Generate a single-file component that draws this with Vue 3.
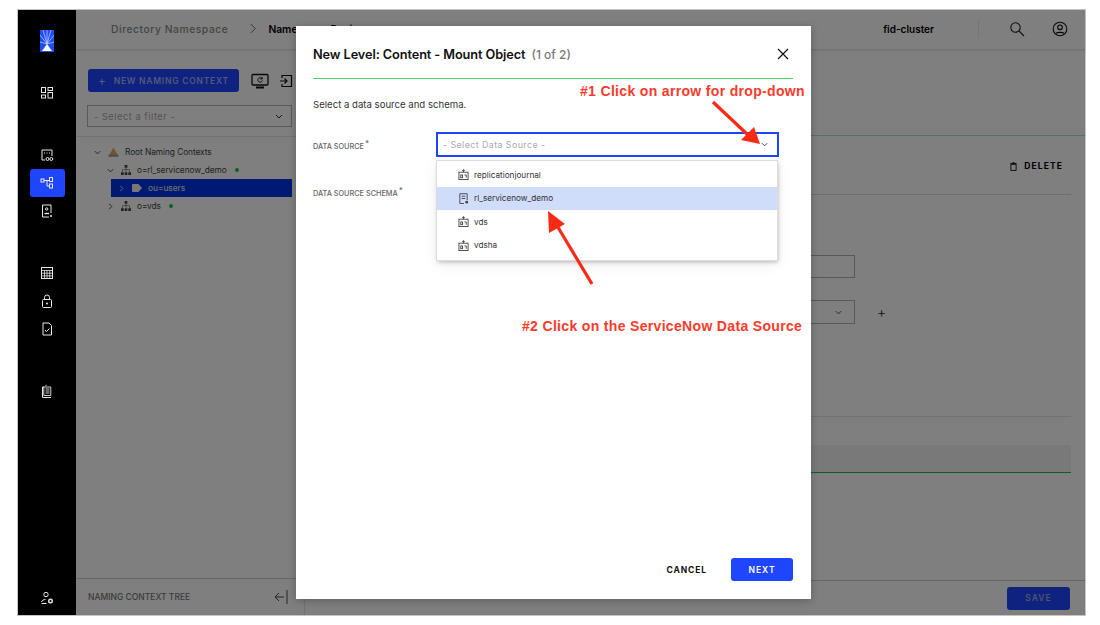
<script setup>
const sideGroups = [
  { cls: 'g1', items: [{ id: 'dash' }] },
  { cls: 'g2', items: [{ id: 'server' }, { id: 'tree', active: true }, { id: 'person' }] },
  { cls: 'g2', items: [{ id: 'grid' }, { id: 'lock' }, { id: 'check' }] },
  { cls: 'g2', items: [{ id: 'list' }] },
]
const options = [
  { label: 'replicationjournal', icon: 'store' },
  { label: 'rl_servicenow_demo', icon: 'doc', hover: true },
  { label: 'vds', icon: 'store' },
  { label: 'vdsha', icon: 'store' },
]
</script>

<template>
  <div class="page">
    <div class="frame">
      <aside class="sidebar">
        <svg class="logo" viewBox="0 0 14 22" width="14" height="22">
          <rect width="14" height="22" fill="#1f4bff" />
          <path d="M7 0v14M3 0l4 14M11 0L7 14M0 5l7 9M14 5L7 14M0 12l7 2M14 12l-7 2" stroke="#cdd8ff" stroke-width=".7" fill="none" />
          <path d="M7 14l5 7H2z" fill="#fff" />
        </svg>
        <div v-for="(g, i) in sideGroups" :key="i" :class="['side-group', g.cls]">
          <div v-for="it in g.items" :key="it.id" :class="['side-item', { active: it.active }]">
            <svg viewBox="0 0 14 14" width="14" height="14" fill="none" stroke="#e8e8e8" stroke-width="1">
              <template v-if="it.id === 'dash'">
                <rect x="1.500" y="1.500" width="4" height="5" /><rect x="8" y="1.500" width="4.500" height="3" />
                <rect x="1.500" y="9" width="4" height="3" /><rect x="8" y="6.500" width="4.500" height="5.500" />
              </template>
              <template v-else-if="it.id === 'server'">
                <path d="M5 12H2V2h10v6" /><path d="M4.500 4.500v1M7 4.500v1M9.500 4.500v1" />
                <circle cx="7.500" cy="11" r="1.500" /><circle cx="11.300" cy="11" r="1.500" />
              </template>
              <template v-else-if="it.id === 'tree'">
                <rect x="1" y="3" width="3" height="3" /><rect x="9.500" y="1.500" width="3" height="4" />
                <rect x="9.500" y="8" width="3" height="4" /><path d="M4 4.500h5.500M7 4.500V10h2.500" />
              </template>
              <template v-else-if="it.id === 'person'">
                <path d="M9 13H2.500V1h8.500v8" /><circle cx="6.700" cy="5" r="1.200" /><path d="M4.500 9.500h4.500" stroke-width="1.400" />
                <circle cx="11" cy="12" r="1" fill="#e8e8e8" stroke="none" />
              </template>
              <template v-else-if="it.id === 'grid'">
                <rect x="1.500" y="1.500" width="11" height="11" /><path d="M1.500 4.500h11M1.500 7.200h11M1.500 9.900h11M4.500 4.500v8M7 4.500v8M9.700 4.500v8" stroke-width=".8" />
              </template>
              <template v-else-if="it.id === 'lock'">
                <rect x="2.500" y="5.500" width="9" height="8" rx="1" /><path d="M4.500 5.500V3.500a2.500 2.500 0 0 1 5 0v2" />
                <circle cx="7" cy="9.500" r="1" fill="#e8e8e8" stroke="none" />
              </template>
              <template v-else-if="it.id === 'check'">
                <path d="M3 1h6l2.500 2.500V13H3z" /><path d="M5 8l1.500 1.500L9.500 6.500" />
              </template>
              <template v-else>
                <path d="M4 3H2.500v10.500H11" /><path d="M6 .8v1.400M3.800 3h7v8.500h-7zM5.500 5h4M5.500 7h4M5.500 9h4" stroke-width=".9" />
              </template>
            </svg>
          </div>
        </div>
        <div class="side-item side-bottom">
          <svg viewBox="0 0 14 14" width="14" height="14" fill="none" stroke="#e8e8e8" stroke-width="1">
            <circle cx="6" cy="3.500" r="2.200" /><path d="M1.500 11c.5-1.500 2-2.500 4-2.500" /><path d="M1.500 12.500h5" />
            <circle cx="10.500" cy="10" r="1.800" stroke-width="1.400" />
          </svg>
        </div>
      </aside>

      <main class="main">
        <header class="topbar">
          <span class="crumb">Directory Namespace</span>
          <svg class="crumb-sep" viewBox="0 0 8 12" width="7" height="11" fill="none" stroke="#555" stroke-width="1"><path d="M1 1l5 5-5 5" /></svg>
          <span class="crumb-now">Namespace Design</span>
          <span class="cluster">fid-cluster</span>
          <span class="top-rule"></span>
          <svg class="top-search" viewBox="0 0 16 16" width="16" height="16" fill="none" stroke="#222" stroke-width="1.100"><circle cx="6.500" cy="6.500" r="4.700" /><path d="M10 10l5 5" /></svg>
          <svg class="top-user" viewBox="0 0 16 16" width="16" height="16" fill="none" stroke="#111" stroke-width="1.100"><circle cx="8" cy="8" r="6.800" /><circle cx="8" cy="6.300" r="2.300" /><path d="M3.800 12.500c1-1.500 7.400-1.500 8.400 0" /></svg>
        </header>

        <div class="body">
          <section class="left">
            <div class="toolbar">
              <button class="primary new-btn"><span class="plus">+</span>NEW NAMING CONTEXT</button>
              <svg class="tool-a" viewBox="0 0 18 16" width="18" height="16" fill="none" stroke="#111" stroke-width="1.300">
                <rect x="1" y="1.500" width="16" height="10.500" rx="1" /><path d="M5 14.500h8" stroke-width="2" /><path d="M11 5.500a2.300 2.300 0 1 0 .4 2M11.200 4v2h-2" stroke-width=".9" />
              </svg>
              <svg class="tool-b" viewBox="0 0 14 14" width="14" height="14" fill="none" stroke="#111" stroke-width="1.200">
                <path d="M3 4V1.500h9.500v11H3V10" /><path d="M1 7h7M5.500 4.500L8 7l-2.500 2.500" />
              </svg>
            </div>
            <div class="filter">
              <span>- Select a filter -</span>
              <svg viewBox="0 0 8 5" width="8" height="5" fill="none" stroke="#333" stroke-width="1"><path d="M1 1l3 3 3-3" /></svg>
            </div>
            <div class="tree">
              <div class="tree-row lv0">
                <svg class="chev" viewBox="0 0 8 5" width="7" height="5" fill="none" stroke="#333"><path d="M1 1l3 3 3-3" /></svg>
                <svg class="ic" viewBox="0 0 12 11" width="11" height="10"><path d="M6 .5l5.500 10H.5z" fill="#e0a85a" /><path d="M.5 8.500h11v2H.5z" fill="#999" /></svg>
                <span>Root Naming Contexts</span>
              </div>
              <div class="tree-row lv1">
                <svg class="chev" viewBox="0 0 8 5" width="7" height="5" fill="none" stroke="#333"><path d="M1 1l3 3 3-3" /></svg>
                <svg class="ic" viewBox="0 0 11 11" width="10" height="10" fill="#444"><rect x="4" y="0" width="3" height="3" /><rect x="0" y="8" width="3" height="3" /><rect x="4" y="8" width="3" height="3" /><rect x="8" y="8" width="3" height="3" /><path d="M5.200 3h.6v2h3.700v3h-.6V5.600H5.800V8h-.6V5.600H2.100V8h-.6V5h3.700z" /></svg>
                <span>o=rl_servicenow_demo</span>
                <i class="dot"></i>
              </div>
              <div class="tree-row lv2 selected">
                <svg class="chev" viewBox="0 0 5 8" width="5" height="7" fill="none" stroke="#ddd"><path d="M1 1l3 3-3 3" /></svg>
                <svg class="ic" viewBox="0 0 10 8" width="10" height="8" fill="#eee"><path d="M0 1a1 1 0 0 1 1-1h5.500L10 4 6.500 8H1a1 1 0 0 1-1-1z" /></svg>
                <span>ou=users</span>
              </div>
              <div class="tree-row lv1">
                <svg class="chev side" viewBox="0 0 5 8" width="5" height="7" fill="none" stroke="#333"><path d="M1 1l3 3-3 3" /></svg>
                <svg class="ic" viewBox="0 0 11 11" width="10" height="10" fill="#444"><rect x="4" y="0" width="3" height="3" /><rect x="0" y="8" width="3" height="3" /><rect x="4" y="8" width="3" height="3" /><rect x="8" y="8" width="3" height="3" /><path d="M5.200 3h.6v2h3.700v3h-.6V5.600H5.800V8h-.6V5.600H2.100V8h-.6V5h3.700z" /></svg>
                <span>o=vds</span>
                <i class="dot"></i>
              </div>
            </div>
            <div class="left-foot">
              <span>NAMING CONTEXT TREE</span>
              <svg viewBox="0 0 15 14" width="15" height="14" fill="none" stroke="#333" stroke-width=".9"><path d="M11 7H2M6 3L2 7l4 4M14 0v14" /></svg>
            </div>
          </section>

          <section class="right">
            <div class="right-head"></div>
            <div class="del-row">
              <svg viewBox="0 0 8 10" width="7" height="9" fill="none" stroke="#000" stroke-width="1"><path d="M1 2.500h6V9.500H1zM.5 1.500h7M3 .5h2" /></svg>
              <span>DELETE</span>
            </div>
            <div class="box input-box"></div>
            <div class="select-row">
              <div class="box select-box">
                <svg viewBox="0 0 8 5" width="7" height="5" fill="none" stroke="#333"><path d="M1 1l3 3 3-3" /></svg>
              </div>
              <span class="add">+</span>
            </div>
            <div class="faint"></div>
            <div class="field"></div>
            <div class="right-foot">
              <button class="primary save">SAVE</button>
            </div>
          </section>
        </div>

        <div class="overlay"></div>

        <div class="modal">
          <div class="m-head">
            <h2>New Level: Content - Mount Object</h2>
            <span class="step">(1 of 2)</span>
            <svg class="close" viewBox="0 0 12 12" width="12" height="12" fill="none" stroke="#111" stroke-width="1.200"><path d="M1 1l10 10M11 1L1 11" /></svg>
          </div>
          <p class="m-desc">Select a data source and schema.</p>
          <div class="m-row">
            <label>DATA SOURCE<sup>*</sup></label>
            <div class="m-field">
              <div class="m-select">
                <span>- Select Data Source -</span>
                <svg viewBox="0 0 8 5" width="7" height="5" fill="none" stroke="#333"><path d="M1 1l3 3 3-3" /></svg>
              </div>
              <div class="menu">
                <div v-for="o in options" :key="o.label" :class="['opt', { hover: o.hover }]">
                  <svg v-if="o.icon === 'store'" viewBox="0 0 12 12" width="11" height="11" fill="none" stroke="#444" stroke-width="1">
                    <rect x="1" y="3.500" width="10" height="8" /><path d="M6 3.500V.8M4.500 2L6 .8 7.500 2" /><rect x="3" y="6.500" width="2" height="3" /><path d="M7 6.500h2v3" />
                  </svg>
                  <svg v-else viewBox="0 0 12 12" width="11" height="11" fill="none" stroke="#444" stroke-width="1">
                    <path d="M6.500 11.500H2V.8h8v7" /><path d="M4 3.500h4M4 6h4" /><circle cx="9.500" cy="10" r="1.500" fill="#444" stroke="none" />
                  </svg>
                  <span>{{ o.label }}</span>
                </div>
              </div>
            </div>
          </div>
          <div class="m-row second">
            <label>DATA SOURCE SCHEMA<sup>*</sup></label>
          </div>
          <div class="m-foot">
            <button class="cancel">CANCEL</button>
            <button class="primary next">NEXT</button>
          </div>
        </div>
      </main>
    </div>

    <div class="note note-1">#1 Click on arrow for drop-down</div>
    <div class="note note-2">#2 Click on the ServiceNow Data Source</div>
    <svg class="arrows" viewBox="0 0 1100 625" width="1100" height="625">
      <path d="M713 102l35 33" stroke="#fb2a14" stroke-width="3.200" />
      <path d="M760 144l-19-4 13-13z" fill="#fb2a14" />
      <path d="M592 284l-36-60" stroke="#fb2a14" stroke-width="3.200" />
      <path d="M548 211l17 13-16 9z" fill="#fb2a14" />
    </svg>
  </div>
</template>

<style scoped>
.page { position: relative; width: 1100px; height: 625px; padding: 10px 15px 10px 18px; box-sizing: border-box; background: #fff; overflow: hidden; font-family: Inter, "Liberation Sans", sans-serif; }
.frame { display: flex; height: 605px; box-shadow: 0 0 0 1px #c4c4c4; }
.sidebar { width: 58px; flex: none; background: #000; display: flex; flex-direction: column; align-items: center; padding-top: 20px; box-sizing: border-box; }
.logo { flex: none; }
.side-group { display: flex; flex-direction: column; align-items: center; }
.g1 { margin-top: 27px; }
.g2 { margin-top: 34px; }
.side-item { width: 35px; height: 28px; display: flex; align-items: center; justify-content: center; border-radius: 3px; }
.side-item.active { background: #1f45ff; }
.side-bottom { margin-top: auto; margin-bottom: 3px; }

.main { position: relative; flex: 1; min-width: 0; display: flex; flex-direction: column; background: #fff; }
.overlay { position: absolute; inset: 0; background: rgba(0, 0, 0, .5); }
.topbar { height: 40px; flex: none; box-sizing: border-box; display: flex; align-items: center; padding: 0 0 2px 35px; border-bottom: 1px solid #e4e4e4; box-shadow: 0 1px 2px rgba(0,0,0,.08); font-size: 10.300px; }
.crumb { color: #8a8a8a; font-weight: 500; letter-spacing: .55px; }
.crumb-sep { margin-left: 22px; }
.crumb-now { margin-left: 11px; color: #000; font-weight: 600; white-space: nowrap; }
.cluster { margin-left: auto; font-weight: 600; color: #000; font-size: 10px; }
.top-rule { width: 1px; height: 18px; background: #e8e8e8; margin-left: 44px; }
.top-search { margin-left: 30px; }
.top-user { margin-left: 27px; margin-right: 17px; }

.body { flex: 1; min-height: 0; display: flex; }
.left { width: 229px; flex: none; display: flex; flex-direction: column; border-right: 1px solid #e4e4e4; box-sizing: border-box; }
.toolbar { display: flex; align-items: center; padding: 19px 0 0 12px; }
button { font-family: inherit; border: 0; cursor: pointer; }
.primary { background: #1f45ff; color: #fff; border-radius: 3px; font-weight: 600; }
.new-btn { width: 151px; height: 23px; font-size: 8.500px; letter-spacing: .75px; color: #9fb0ff; padding: 0 0 0 10px; display: flex; align-items: center; }
.plus { font-size: 12px; font-weight: 400; margin-right: 7px; }
.tool-a { margin-left: 12px; }
.tool-b { margin-left: 10px; }
.filter { margin: 13px 12px 0 11px; height: 22px; box-sizing: border-box; border: 1px solid #b4b4b4; display: flex; align-items: center; justify-content: space-between; padding: 0 8px 0 6px; font-size: 9.200px; color: #a8a8a8; letter-spacing: .55px; }
.tree { margin-top: 9px; border-top: 1px solid #e4e4e4; padding-top: 6px; font-size: 8.300px; color: #444; }
.tree-row { height: 18px; display: flex; align-items: center; white-space: nowrap; letter-spacing: -.05px; }
.tree-row .ic { margin-left: 7px; margin-right: 6px; flex: none; }
.tree-row .chev { flex: none; }
.lv0 { padding-left: 18px; }
.lv1 { padding-left: 31px; }
.lv1 .chev.side { margin: 0 1px; }
.lv2 { margin: 0 12px 0 35px; padding-left: 8px; color: #ddd; font-weight: 500; }
.lv2 .ic { margin-left: 8px; margin-right: 6px; }
.lv2.selected { background: #0034e6; }
.dot { width: 4px; height: 4px; border-radius: 50%; background: #17c23a; margin-left: 8px; }
.left-foot { margin-top: auto; height: 37px; box-sizing: border-box; border-top: 1px solid #d0d0d0; display: flex; align-items: center; justify-content: space-between; padding: 0 16px 0 12px; font-size: 8.500px; font-weight: 500; color: #777; }

.right { flex: 1; min-width: 0; display: flex; flex-direction: column; }
.right-head { height: 86px; flex: none; box-sizing: border-box; border-bottom: 1.500px solid #a8e8b8; }
.del-row { height: 59px; flex: none; box-sizing: border-box; margin-right: 14px; border-bottom: 1px solid #dcdcdc; display: flex; align-items: center; justify-content: flex-end; gap: 7px; padding: 2px 8px 0 0; font-size: 8.500px; font-weight: 700; letter-spacing: 1.100px; color: #000; }
.box { border: 1px solid #b0b0b0; box-sizing: border-box; }
.input-box { width: 455px; height: 23px; margin: 60px 0 0 95px; flex: none; }
.select-row { display: flex; align-items: center; margin: 22px 0 0 95px; flex: none; }
.select-box { width: 455px; height: 24px; display: flex; align-items: center; justify-content: flex-end; padding-right: 12px; }
.add { margin-left: 22px; font-size: 14px; line-height: 19px; padding-bottom: 2px; color: #222; font-weight: 300; }
.faint { margin: 92px 14px 0 20px; height: 1px; background: #e4e4e4; flex: none; }
.field { margin: 28px 14px 0 20px; height: 27px; flex: none; background: #f2f2f2; border-bottom: 1.500px solid #15c22e; }
.right-foot { margin-top: auto; height: 35px; box-sizing: border-box; border-top: 1px solid #d0d0d0; display: flex; align-items: center; justify-content: flex-end; padding-right: 15px; }
.save { width: 63px; height: 23px; font-size: 8.500px; letter-spacing: 1px; color: #9fa6d8; }

.modal { position: absolute; left: 220px; top: 16px; width: 515px; height: 573px; background: #fff; display: flex; flex-direction: column; padding: 0 18px 18px 17px; box-sizing: border-box; box-shadow: 0 2px 8px rgba(0,0,0,.25); }
.m-head { height: 53px; flex: none; box-sizing: border-box; border-bottom: 1.500px solid #45d96c; display: flex; align-items: center; padding-top: 4px; }
h2 { margin: 0; font-size: 12.750px; font-weight: 600; color: #111; letter-spacing: -.1px; white-space: nowrap; }
.step { margin-left: 6px; font-size: 12px; font-weight: 500; color: #777; }
.close { margin-left: auto; margin-right: 4px; }
.m-desc { margin: 20px 0 0; font-size: 9.600px; color: #333; line-height: 12px; }
.m-row { display: flex; margin-top: 21px; }
.m-row label { width: 123px; flex: none; font-size: 7.300px; font-weight: 500; color: #666; padding-top: 10px; white-space: nowrap; }
.m-row sup { font-size: 8px; line-height: 0; margin-left: 1px; }
.m-row.second { margin-top: 22px; height: 24px; }
.m-field { position: relative; width: 343px; flex: none; }
.m-select { height: 25px; box-sizing: border-box; border: 2px solid #1f45ff; display: flex; align-items: center; justify-content: space-between; padding: 0 9px 1px 5px; font-size: 8.800px; color: #aaa; letter-spacing: .45px; }
.menu { position: absolute; left: 1px; top: 29px; width: 340px; height: 99px; box-sizing: border-box; padding-top: 2px; background: #fff; box-shadow: 0 0 0 1px #ddd, 1px 2px 4px rgba(0,0,0,.25), 0 4px 14px rgba(0,0,0,.08); z-index: 1; }
.opt { height: 23.500px; display: flex; align-items: center; padding-left: 21px; gap: 5px; font-size: 8.200px; color: #333; }
.opt.hover { background: #cfdcfa; }
.m-foot { margin-top: auto; display: flex; align-items: center; justify-content: flex-end; }
.cancel { background: none; font-size: 8.500px; font-weight: 700; letter-spacing: .9px; color: #111; margin-right: 24px; padding: 0; }
.next { width: 62px; height: 23px; font-size: 8.500px; letter-spacing: 1px; padding: 0; }

.note { position: absolute; z-index: 2; font-family: "Liberation Sans", Arial, sans-serif; font-weight: 700; font-size: 14px; line-height: 16px; color: #fb3a2c; white-space: nowrap; }
.note-1 { left: 580px; top: 83px; letter-spacing: .33px; }
.note-2 { left: 522px; top: 318px; letter-spacing: .33px; }
.arrows { position: absolute; z-index: 2; left: 0; top: 0; pointer-events: none; }
</style>
